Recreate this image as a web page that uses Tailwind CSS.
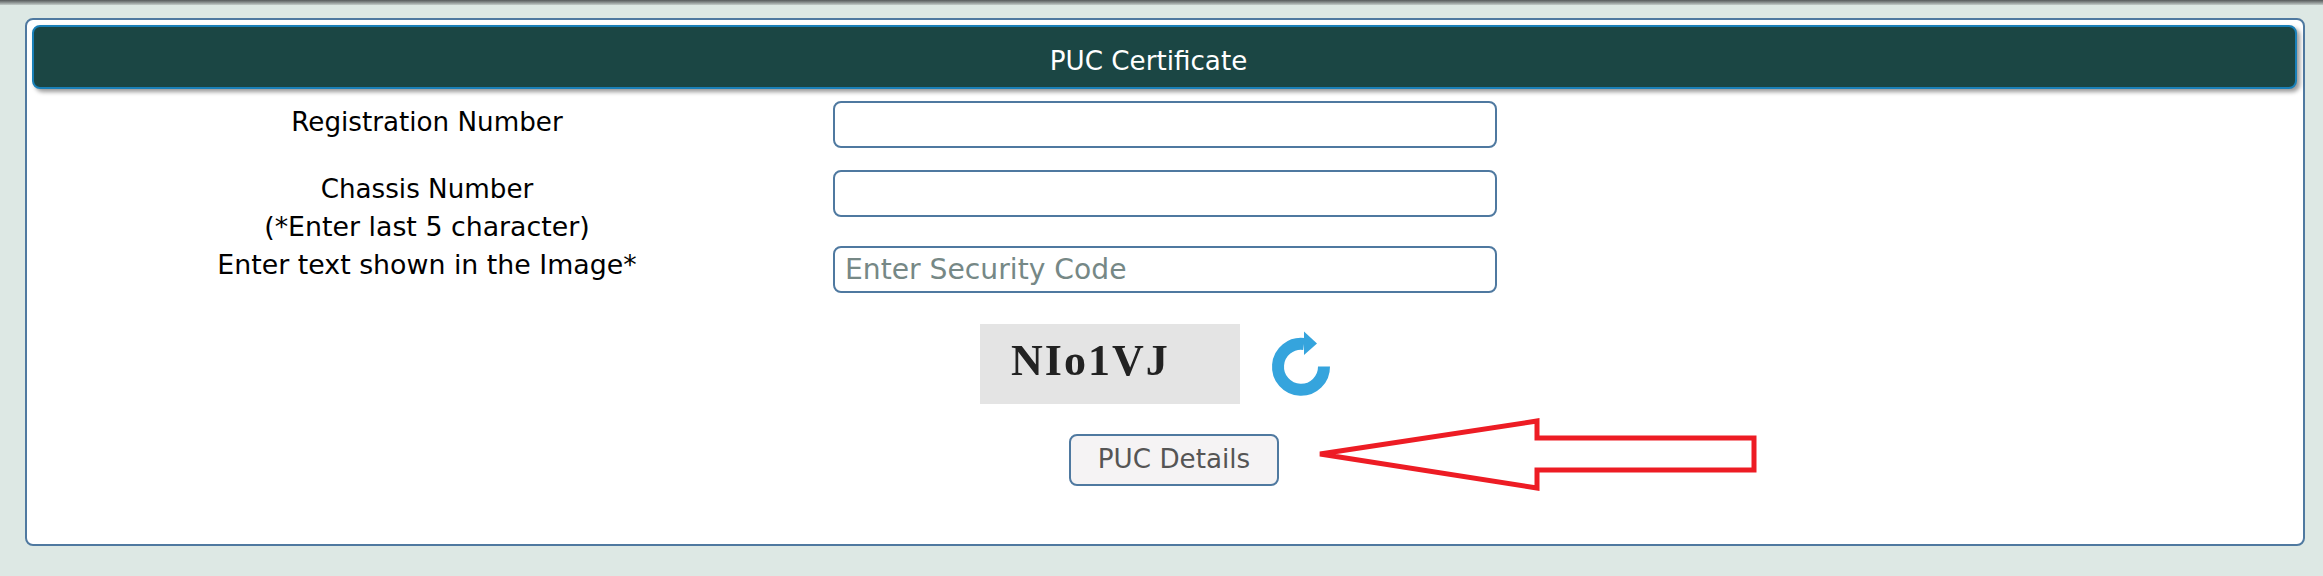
<!DOCTYPE html>
<html lang="en">
<head>
  <meta charset="UTF-8">
  <title>PUC Certificate</title>
  <script src="https://cdn.jsdelivr.net/npm/@tailwindcss/browser@4"></script>
</head>
<body class="bg-[#dde8e4] h-[576px] overflow-hidden font-['DejaVu_Sans',sans-serif] text-black">
  <!-- top shadow of the page header -->
  <div class="h-[5px] bg-gradient-to-b from-[#55595a] to-[#c4cdca]"></div>

  <div class="relative mt-[13px] ml-[25px] mr-[18px] h-[528px] bg-white border-2 border-[#4f79a0] rounded-[8px]">
    <!-- title bar -->
    <div class="mt-[5px] ml-[5px] mr-[6px] h-[64px] bg-[#1b4644] border-2 border-[#1a80b8] rounded-[8px] shadow-[3px_3px_4px_rgba(0,0,0,0.4)] text-white text-center text-[26.2px] leading-[68px] pr-[32px]">PUC Certificate</div>

    <!-- form -->
    <div class="mt-[12px] flex items-start">
      <div class="w-[806px] pr-[6px] pt-[3px] text-center text-[26.2px] leading-[37px]">Registration Number</div>
      <input type="text" class="w-[664px] h-[47px] px-[10px] bg-white border-2 border-[#4f79a0] rounded-[8px] text-[28px]">
    </div>
    <div class="mt-[22px] flex items-start">
      <div class="w-[806px] pr-[6px] pt-[1px] text-center text-[26.2px] leading-[37px]">Chassis Number<br><span class="text-[26.8px]">(*Enter last 5 character)</span></div>
      <input type="text" class="w-[664px] h-[47px] px-[10px] bg-white border-2 border-[#4f79a0] rounded-[8px] text-[28px]">
    </div>
    <div class="flex items-start">
      <div class="w-[806px] pr-[6px] text-center text-[26.8px] leading-[37px]">Enter text shown in the Image*</div>
      <input type="text" placeholder="Enter Security Code" class="w-[664px] h-[47px] px-[10px] bg-white border-2 border-[#4f79a0] rounded-[8px] text-[28.2px] placeholder:text-[#768886]">
    </div>

    <!-- captcha -->
    <div class="mt-[31px] ml-[953px] flex items-start gap-[31px]">
      <div class="w-[260px] h-[80px] bg-[#e4e4e4] pl-[31px] pt-[12px] font-['Liberation_Serif',serif] font-bold text-[44px] leading-[50px] tracking-[2px] text-[#222] blur-[0.5px]">NIo1VJ</div>
      <svg class="mt-[7px]" width="60" height="67" viewBox="0 0 60 67" fill="none">
        <path d="M53 35.5 A23 23 0 1 1 33 13" stroke="#35a4dd" stroke-width="12"></path>
        <path d="M33 0.5 L46 12.5 L33 24 Z" fill="#35a4dd"></path>
      </svg>
    </div>

    <button class="block mt-[30px] ml-[1042px] w-[210px] h-[52px] bg-[#f5f3f4] border-2 border-[#4f79a0] rounded-[8px] text-[#555] text-[26.2px]">PUC Details</button>

    <!-- annotation arrow -->
    <svg class="absolute left-[1290px] top-[398px]" width="440" height="74" viewBox="0 0 440 74" fill="none">
      <path d="M3 36 L220 3 V20 H437 V52 H220 V70 Z" stroke="#ed1c24" stroke-width="5"></path>
    </svg>
  </div>
</body>
</html>
